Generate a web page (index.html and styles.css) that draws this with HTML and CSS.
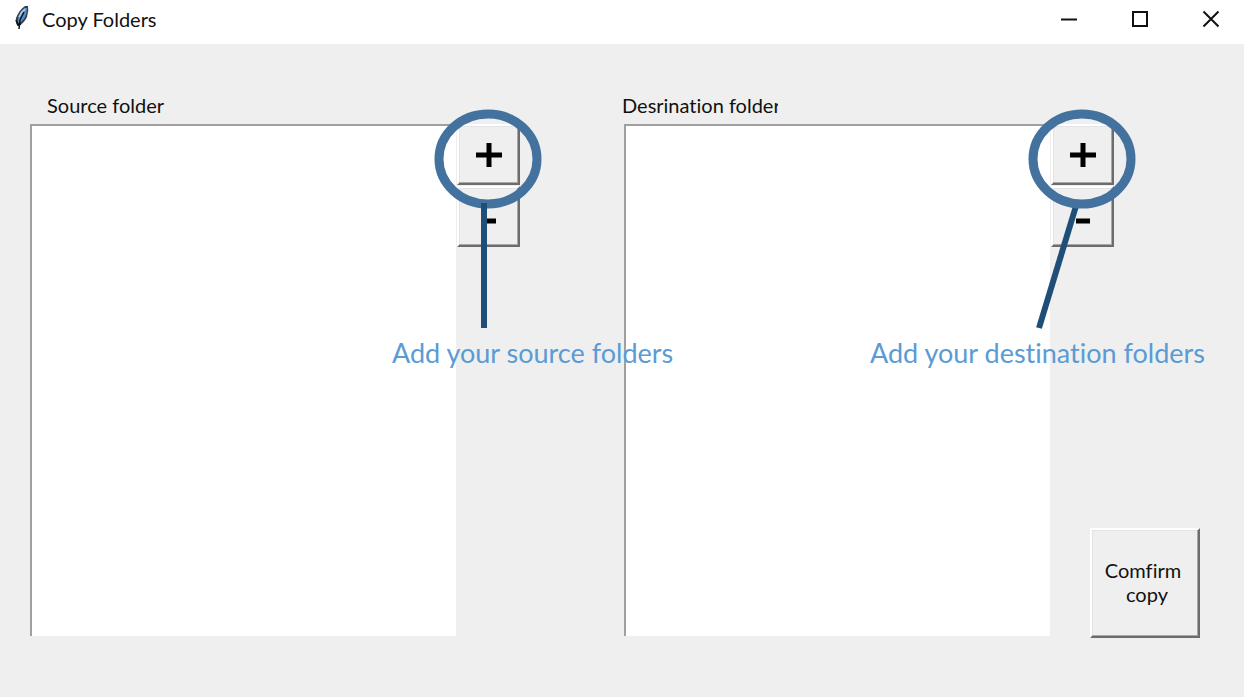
FILE: index.html
```html
<!DOCTYPE html>
<html lang="en">
<head>
<meta charset="utf-8">
<title>Copy Folders</title>
<link rel="stylesheet" href="styles.css">
</head>
<body>
<header class="titlebar">
  <svg class="feather" viewBox="0 0 16 26" aria-hidden="true">
    <path d="M4 21 Q1 18 2 13 Q5 5 11 1 L14 1 Q15 6 13 12 Q10 18 6 20Z" fill="#3a3f47"/>
    <path d="M4 17 Q3 11 11 3 L13 3 Q13 8 11 12 Q8 17 5 18Z" fill="#4f93dc"/>
    <path d="M5 12 Q7 7 11 4" fill="none" stroke="#a9ceec" stroke-width="1.6"/>
    <path d="M10 7 L6 15 L5 24" fill="none" stroke="#111" stroke-width="1.5"/>
    <path d="M2 15 L4 20 L7 19" fill="none" stroke="#111" stroke-width="1.5"/>
  </svg>
  <h1 class="title">Copy Folders</h1>
  <div class="window-controls">
    <button class="control" aria-label="Minimize"><svg viewBox="0 0 18 18"><path d="M1 9.500H17"/></svg></button>
    <button class="control" aria-label="Maximize"><svg viewBox="0 0 18 18"><path d="M2 2H16V16H2Z"/></svg></button>
    <button class="control" aria-label="Close"><svg viewBox="0 0 18 18"><path d="M1.500 1.500L16.500 16.500M16.500 1.500L1.500 16.500"/></svg></button>
  </div>
</header>
<main class="workspace">
  <label class="label label-source" for="source">Source folder</label>
  <label class="label label-destination" for="destination"><span class="label-clip">Desrination folder</span></label>
  <select class="list list-source" id="source" multiple></select>
  <div class="side side-source">
    <button class="button square" aria-label="Add source folder"><svg viewBox="0 0 26 26"><path d="M0 13H26M13 1V25"/></svg></button>
    <button class="button square" aria-label="Remove source folder"><svg viewBox="0 0 26 26"><path d="M6 17H20"/></svg></button>
    <svg class="callout" viewBox="0 0 108 220" aria-hidden="true">
      <ellipse cx="54" cy="50" rx="49" ry="45"/>
      <path d="M50 94V219"/>
    </svg>
    <p class="note note-source">Add your source folders</p>
  </div>
  <select class="list list-destination" id="destination" multiple></select>
  <div class="side side-destination">
    <button class="button square" aria-label="Add destination folder"><svg viewBox="0 0 26 26"><path d="M0 13H26M13 1V25"/></svg></button>
    <button class="button square" aria-label="Remove destination folder"><svg viewBox="0 0 26 26"><path d="M6 17H20"/></svg></button>
    <button class="button confirm"><span>Comfirm</span><span class="second-line">copy</span></button>
    <svg class="callout" viewBox="0 0 108 220" aria-hidden="true">
      <path d="M48 97L11 219"/>
      <ellipse cx="54" cy="50" rx="49" ry="45"/>
    </svg>
    <p class="note note-destination">Add your destination folders</p>
  </div>
</main>
</body>
</html>
```
FILE: styles.css
```css
* { box-sizing: border-box; }

body {
  margin: 0;
  min-height: 100vh;
  display: flex;
  flex-direction: column;
  background: #efefef;
  color: #111;
  font: 20px/24px Lato, "Open Sans", sans-serif;
  font-variant-ligatures: none;
}

.titlebar {
  display: flex;
  align-items: center;
  height: 44px;
  padding: 0 15px 6px 12px;
  background: #fff;
}

.feather {
  width: 16px;
  height: 26px;
  margin: 0 12px 2px 2px;
}

.title {
  margin: 0;
  font-size: 20px;
  font-weight: 400;
}

.window-controls {
  display: flex;
  gap: 35px;
  margin-left: auto;
}

.control {
  width: 36px;
  height: 36px;
  padding: 9px;
  border: 0;
  background: none;
}

.control svg {
  display: block;
  width: 18px;
  height: 18px;
  fill: none;
  stroke: #111;
  stroke-width: 2;
}

.workspace {
  flex: 1;
  display: grid;
  grid-template-columns: 1fr 168px 1fr 194px;
  grid-template-rows: 31px 1fr;
  padding: 49px 0 61px 30px;
}

.label-source {
  grid-area: 1 / 1;
  padding-left: 17px;
}

.label-destination {
  grid-area: 1 / 3;
  margin-left: -2px;
}

.label-clip {
  display: inline-block;
  max-width: 156px;
  overflow: hidden;
  white-space: nowrap;
}

.list {
  width: 100%;
  height: 100%;
  border: 0 solid #a0a0a0;
  border-width: 2px 0 0 2px;
  border-radius: 0;
  background: #fff;
  outline: 0;
}

.list-source { grid-area: 2 / 1; }
.list-destination { grid-area: 2 / 3; }

.side {
  position: relative;
  display: flex;
  flex-direction: column;
  align-items: flex-start;
  padding-left: 1px;
}

.side-source { grid-area: 2 / 2; }
.side-destination { grid-area: 2 / 4; }

.button {
  border: 2px solid;
  border-color: #fff #6c6c6c #6c6c6c #fff;
  border-radius: 0;
  background: #efefef;
  box-shadow: inset -1px -1px #a8a8a8, inset 1px 1px #e3e3e3;
  color: #111;
  font: inherit;
}

.square {
  display: grid;
  place-items: center;
  width: 63px;
  height: 61px;
  margin-bottom: 1px;
  padding: 0;
}

.square svg {
  width: 26px;
  height: 26px;
  fill: none;
  stroke: #000;
  stroke-width: 5;
}

.confirm {
  display: flex;
  flex-direction: column;
  align-items: center;
  justify-content: center;
  width: 110px;
  height: 110px;
  margin: auto 0 -2px 39px;
  padding: 0 4px 2px 0;
}

.second-line { padding-left: 8px; }

.callout {
  position: absolute;
  top: -15px;
  left: -22px;
  width: 108px;
  height: 220px;
  fill: none;
  stroke: #1f4e79;
  stroke-width: 6;
  pointer-events: none;
}

.callout ellipse {
  stroke: #44729f;
  stroke-width: 9;
}

.note {
  position: absolute;
  top: 213px;
  margin: 0;
  color: #5b9bd5;
  font-size: 27px;
  line-height: 32px;
  white-space: nowrap;
}

.note-source { left: -64px; }
.note-destination { left: -180px; }
```
